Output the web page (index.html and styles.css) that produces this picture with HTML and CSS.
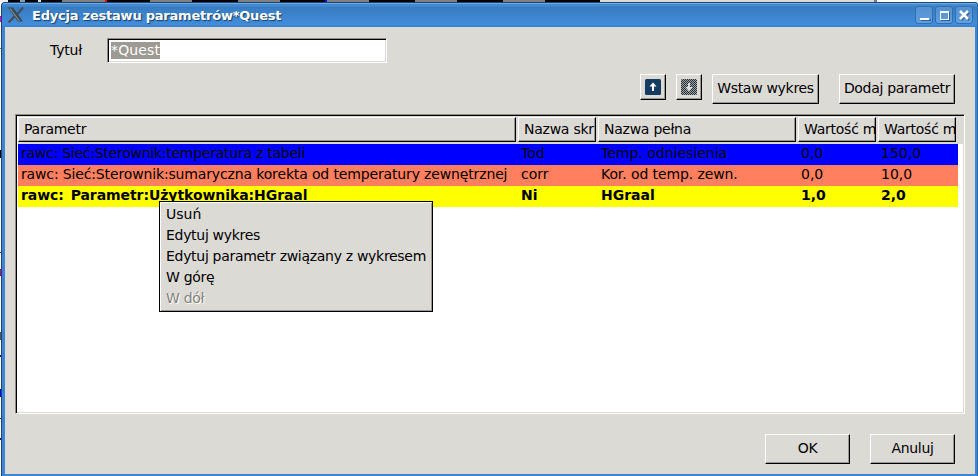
FILE: index.html
```html
<!DOCTYPE html>
<html lang="pl">
<head>
<meta charset="utf-8">
<title>Edycja zestawu parametrów*Quest</title>
<link rel="stylesheet" href="styles.css">
</head>
<body>
<div class="desktop-top"></div>
<div class="desktop-row">
<div class="desktop-left"></div>
<main class="window">
  <header class="titlebar">
    <svg class="app-icon" width="18" height="18" viewBox="0 0 18 18">
      <path d="M1 1.500h5l10 14h-5z" fill="#3c464e"/><path d="M3 2.500l9.500 12.500" stroke="#87929b" stroke-width="1.200"/>
      <path d="M16 1.500L10 8.500M7.500 10.500l-6 6" stroke="#454b50" stroke-width="2"/>
    </svg>
    <h1 class="title">Edycja zestawu parametrów*Quest</h1>
    <div class="controls">
      <svg class="control" viewBox="1 1 16 16" shape-rendering="crispEdges"><path d="M6 14.500h9V13" stroke="#315f91" fill="none"/><path d="M5 13h9" stroke="#fff" stroke-width="2"/></svg>
      <svg class="control" viewBox="1 1 16 16" shape-rendering="crispEdges"><path d="M6 14.500h8.500V6" stroke="#315f91" fill="none"/><path d="M5 5h9v9H5zM6 7v6h7V7z" fill="#fff" fill-rule="evenodd"/></svg>
      <svg class="control" viewBox="1 1 16 16"><path d="M6 6l8 8M14 6l-8 8" stroke="#315f91" stroke-width="2.500"/><path d="M5 5l8 8M13 5l-8 8" stroke="#fff" stroke-width="2.500"/></svg>
    </div>
  </header>
  <section class="content">
    <div class="title-row">
      <label class="label" for="name">Tytuł</label>
      <div class="field" id="name"><span class="selected">*Quest</span></div>
    </div>
    <div class="toolbar">
      <button class="button icon-button"><svg width="16" height="16" viewBox="0 0 16 16"><rect width="16" height="16" rx="1.500" fill="#153b60"/><path d="M8 3.500l3.500 4H9V12H7V7.500H4.500z" fill="#fff"/></svg></button>
      <button class="button icon-button"><svg width="16" height="16" viewBox="0 0 16 16"><defs><pattern id="dots" width="2" height="2" patternUnits="userSpaceOnUse"><path d="M0 0h1v1H0zM1 1h1v1H1z" fill="#22303c" shape-rendering="crispEdges"/></pattern></defs><rect width="16" height="16" rx="1.500" fill="#a3a29e"/><rect width="16" height="16" rx="1.500" fill="url(#dots)"/><path d="M7 4h2v4h2.500L8 12.500 4.500 8H7z" fill="#dedddb"/></svg></button>
      <button class="button insert">Wstaw wykres</button>
      <button class="button add">Dodaj parametr</button>
    </div>
    <div class="list">
      <div class="grid head">
        <div class="th">Parametr</div><div class="th">Nazwa skr</div><div class="th">Nazwa pełna</div><div class="th">Wartość m</div><div class="th">Wartość m</div>
      </div>
      <div class="grid row blue"><span class="source">rawc: Sieć:Sterownik:temperatura z tabeli</span><span>Tod</span><span>Temp. odniesienia</span><span>0,0</span><span>150,0</span></div>
      <div class="grid row coral"><span class="source">rawc: Sieć:Sterownik:sumaryczna korekta od temperatury zewnętrznej</span><span>corr</span><span class="full">Kor. od temp. zewn.</span><span>0,0</span><span>10,0</span></div>
      <div class="grid row yellow"><span class="source">rawc: Parametr:Użytkownika:HGraal</span><span>Ni</span><span>HGraal</span><span>1,0</span><span>2,0</span></div>
    </div>
    <footer class="actions"><button class="button action">OK</button><button class="button action">Anuluj</button></footer>
  </section>
</main>
</div>
<div class="menu">
  <div class="item first">Usuń</div><div class="item">Edytuj wykres</div><div class="item">Edytuj parametr związany z wykresem</div><div class="item">W górę</div><div class="item disabled">W dół</div>
</div>
</body>
</html>
```

FILE: styles.css
```css
* { box-sizing: border-box; }
body { margin: 0; width: 978px; height: 476px; overflow: hidden; background: #fff; color: #000; font: 14px/21px "DejaVu Sans", sans-serif; }
.desktop-top { height: 2px; background: linear-gradient(90deg, #eee 0 8px, #000 8px 20px, #8d9dac 20px 25px, #000 25px 38px, #ddd 38px 41px, #000 41px 62px, #808080 62px 105px, #f00 105px 107px, #000 107px 150px, #808080 150px 192px, #000 192px 238px, #808080 238px 280px, #000 280px 325px, #00f 325px 327px, #808080 327px 369px, #000 369px 415px, #808080 415px 457px, #000 457px 503px, #808080 503px 545px, #000 545px 600px, #dcdad5 600px 874px, #7279a0 874px 877px, #fff 877px); }
.desktop-row { display: flex; height: 474px; }
.desktop-left { width: 1px; background: linear-gradient(#fff 0 14px, #c0c 14px 20px, #fff 20px 46px, #a60 46px 47px, #fff 47px 148px, #000 148px 156px, #fff 156px 250px, #a00 250px 251px, #fff 251px 267px, #a0a 267px 274px, #fff 274px 330px, #555 330px 338px, #fff 338px 353px, #00f 353px 355px, #fff 355px 387px, #00f 387px 395px, #fff 395px 416px, #00f 416px 417px, #fff 417px 436px, #00f 436px 438px, #fff 438px); }
.window { width: 977px; height: 474px; border: solid #34689f; border-width: 1px 1px 0; border-radius: 4px 3px 0 0; border-left-color: #1d466f; border-top-color: #1d466f; background: #3d85d2; }
.titlebar { display: flex; height: 24px; align-items: center; padding: 0 4px 0 5px; border-radius: 3px 3px 0 0; background: linear-gradient(#6dabea 0 1px, #4389d0 1px 3px, #387cc0 4px, #428ddb 22px, #347bc8 24px); }
.app-icon { margin-right: 7px; }
.title { flex: 1; margin: 0; padding-top: 2px; color: #fff; font: bold 13px/20px "DejaVu Sans", sans-serif; letter-spacing: -0.22px; white-space: nowrap; text-shadow: 1px 1px 1px #183c63; }
.controls { display: flex; gap: 2px; }
.control { display: block; width: 18px; height: 18px; border: 1px solid #316fb1; border-radius: 3px; background: linear-gradient(#5290d1, #609fe0); }
.content { margin: 0 2px 0 3px; height: 447px; background: #dcdad5; padding: 11px 10px 0; }
.title-row { display: flex; height: 25px; padding-left: 35px; }
.label { width: 57px; line-height: 24px; letter-spacing: -0.2px; }
.field { width: 280px; height: 25px; padding: 3px; border: 1px solid; border-color: #918d84 #fff #fff #918d84; background: #fff; box-shadow: inset 1px 1px #000, inset -1px -1px #dcdad5; line-height: 17px; }
.selected { display: inline-block; height: 17px; background: #9c9a93; color: #fff; line-height: 17px; letter-spacing: 0.15px; }
.toolbar { display: flex; align-items: flex-start; justify-content: flex-end; margin-top: 11px; height: 40px; padding-right: 10px; }
.button { font: inherit; letter-spacing: -0.3px; color: #000; border: 1px solid; border-color: #fff #000 #000 #fff; border-radius: 0; background: #dcdad5; box-shadow: inset -1px -1px #999790; padding: 0 0 2px; height: 30px; white-space: nowrap; }
.icon-button { display: flex; width: 26px; height: 26px; padding: 4px; margin-right: 10px; }
.insert { width: 107px; margin-right: 20px; }
.add { width: 116px; }
.list { width: 950px; height: 300px; border: 1px solid; border-color: #918d84 #fff #fff #918d84; background: #fff; padding: 1px 1px 1px 2px; box-shadow: inset 1px 1px #000, inset -1px -1px #dcdad5; }
.grid { display: grid; grid-template-columns: 500px 80px 200px 80px 80px; }
.head { width: 945px; height: 28px; padding-top: 1px; background: #dcdad5; }
.th { height: 25px; margin-right: 2px; overflow: hidden; white-space: nowrap; border: 1px solid; border-color: #fff #000 #000 #fff; box-shadow: inset -1px -1px #999790; padding-left: 5px; line-height: 22px; letter-spacing: -0.25px; }
.row { width: 940px; height: 21px; line-height: 19px; padding-left: 3px; white-space: nowrap; }
.blue { background: #00f; }
.blue .source { letter-spacing: -0.25px; }
.coral { background: #ff7f5e; }
.coral .source { letter-spacing: -0.145px; }
.coral .full { letter-spacing: -0.1px; }
.yellow { background: #ff0; font-weight: bold; }
.yellow .source { letter-spacing: -0.07px; word-spacing: 2px; }
.actions { display: flex; justify-content: flex-end; gap: 20px; padding: 20px 10px 0 0; }
.action { width: 85px; }
.menu { position: absolute; left: 159px; top: 201px; width: 274px; height: 111px; padding: 2px 6px; border: 1px solid #000; background: #dcdad5; box-shadow: inset 1px 1px #fff, inset -1px -1px #999790; white-space: nowrap; }
.item { height: 21px; line-height: 20px; letter-spacing: -0.3px; }
.item.first { letter-spacing: 0; }
.disabled { color: #85837f; text-shadow: 1px 1px #fff; }
```
